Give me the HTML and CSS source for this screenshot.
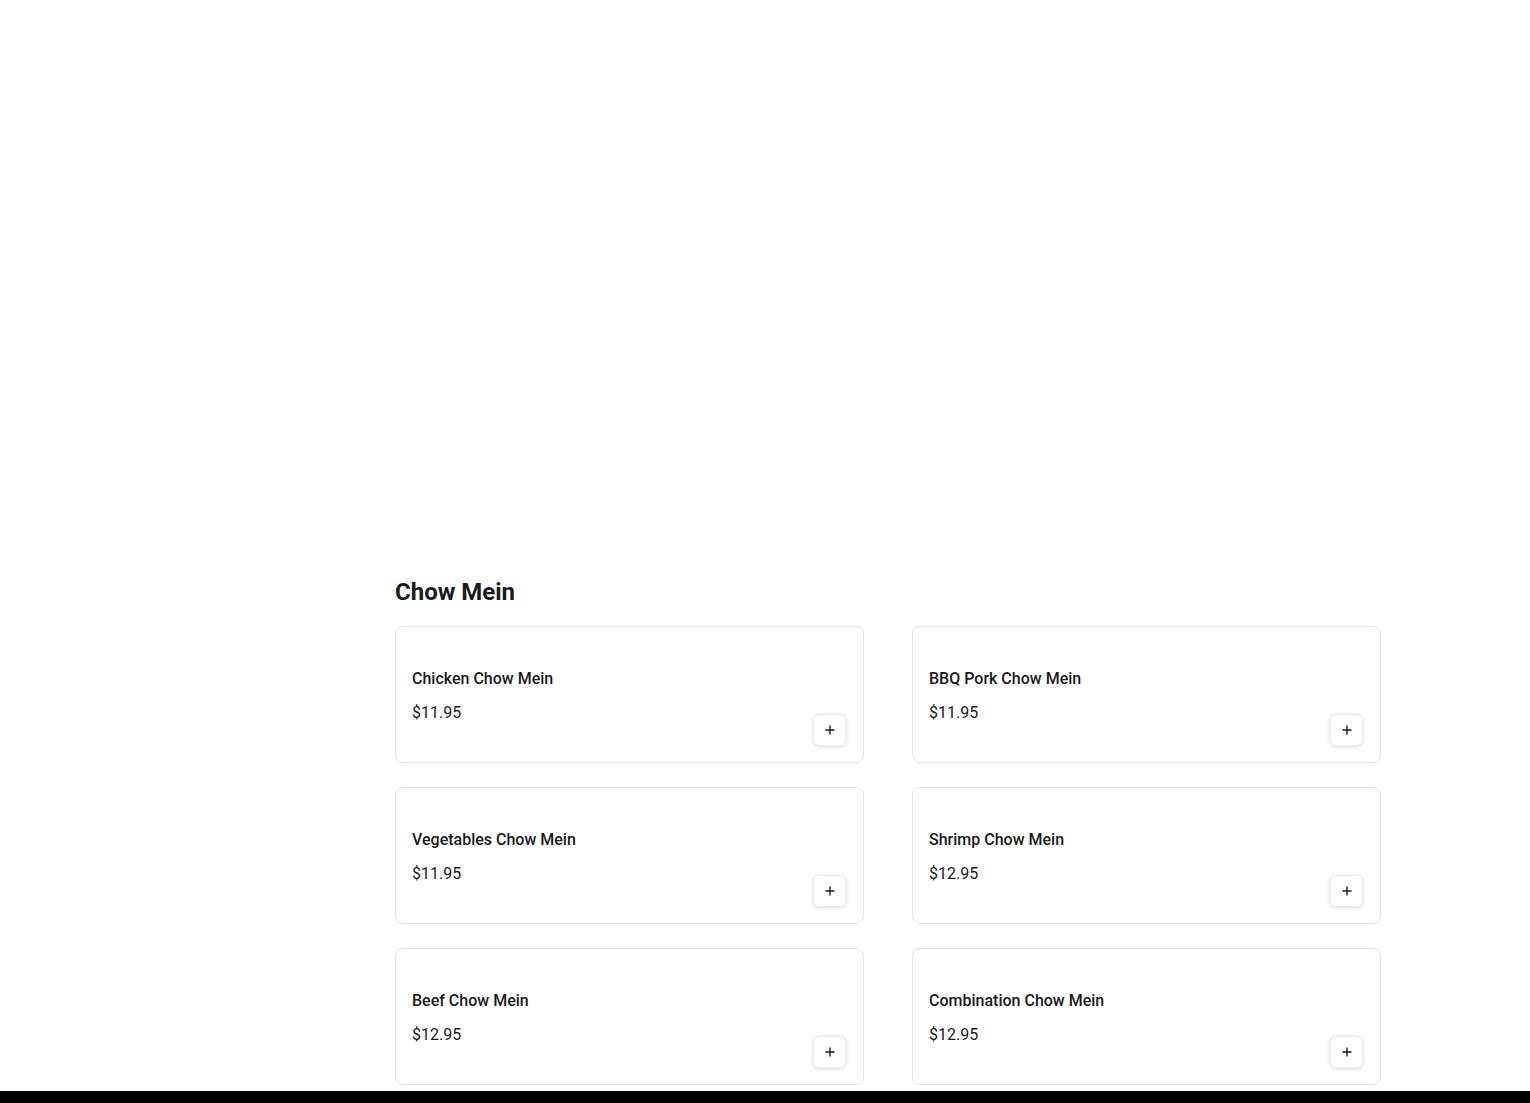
FILE: index.html
```html
<!DOCTYPE html>
<html lang="en">
<head>
<meta charset="utf-8">
<title>Chow Mein</title>
<link rel="stylesheet" href="styles.css">
</head>
<body>
<div class="hero"></div>
<div class="layout">
  <aside class="sidebar"></aside>
  <main class="menu">
    <h2 class="section-title">Chow Mein</h2>
    <div class="grid">
      <div class="card">
        <div class="info"><div class="name">Chicken Chow Mein</div><div class="price">$11.95</div></div>
        <button class="add" aria-label="Add"><svg viewBox="0 0 12 12" width="12" height="12"><path d="M6 1.5v9M1.5 6h9" stroke="#1a1a1a" stroke-width="1.4" fill="none"/></svg></button>
      </div>
      <div class="card">
        <div class="info"><div class="name">BBQ Pork Chow Mein</div><div class="price">$11.95</div></div>
        <button class="add" aria-label="Add"><svg viewBox="0 0 12 12" width="12" height="12"><path d="M6 1.5v9M1.5 6h9" stroke="#1a1a1a" stroke-width="1.4" fill="none"/></svg></button>
      </div>
      <div class="card">
        <div class="info"><div class="name">Vegetables Chow Mein</div><div class="price">$11.95</div></div>
        <button class="add" aria-label="Add"><svg viewBox="0 0 12 12" width="12" height="12"><path d="M6 1.5v9M1.5 6h9" stroke="#1a1a1a" stroke-width="1.4" fill="none"/></svg></button>
      </div>
      <div class="card">
        <div class="info"><div class="name">Shrimp Chow Mein</div><div class="price">$12.95</div></div>
        <button class="add" aria-label="Add"><svg viewBox="0 0 12 12" width="12" height="12"><path d="M6 1.5v9M1.5 6h9" stroke="#1a1a1a" stroke-width="1.4" fill="none"/></svg></button>
      </div>
      <div class="card">
        <div class="info"><div class="name">Beef Chow Mein</div><div class="price">$12.95</div></div>
        <button class="add" aria-label="Add"><svg viewBox="0 0 12 12" width="12" height="12"><path d="M6 1.5v9M1.5 6h9" stroke="#1a1a1a" stroke-width="1.4" fill="none"/></svg></button>
      </div>
      <div class="card">
        <div class="info"><div class="name">Combination Chow Mein</div><div class="price">$12.95</div></div>
        <button class="add" aria-label="Add"><svg viewBox="0 0 12 12" width="12" height="12"><path d="M6 1.5v9M1.5 6h9" stroke="#1a1a1a" stroke-width="1.4" fill="none"/></svg></button>
      </div>
    </div>
  </main>
</div>
<footer class="footer"></footer>
</body>
</html>
```
FILE: styles.css
```css
* { box-sizing: border-box; }
html, body { margin: 0; padding: 0; background: #fff; }
body {
  font-family: Roboto, "Liberation Sans", Arial, sans-serif;
  color: #1a1a1a;
  overflow: hidden;
}
.hero { height: 576px; }
.layout {
  width: 1232px;
  margin: 0 auto;
  display: grid;
  grid-template-columns: 200px 1fr;
  column-gap: 46px;
  padding-bottom: 6px;
}
.section-title {
  margin: 0 0 18px;
  font-size: 24px;
  line-height: 32px;
  font-weight: 700;
  color: #1a1a1a;
}
.grid {
  display: grid;
  grid-template-columns: 1fr 1fr;
  column-gap: 48px;
  row-gap: 24px;
}
.card {
  height: 137px;
  border: 1px solid #e3e3e3;
  border-radius: 8px;
  padding: 16px;
  display: flex;
  justify-content: space-between;
}
.info { padding-top: 24px; }
.name {
  font-size: 16px;
  line-height: 24px;
  font-weight: 500;
}
.price {
  margin-top: 10px;
  font-size: 16px;
  line-height: 24px;
  font-weight: 400;
}
.add {
  align-self: flex-end;
  width: 33px;
  height: 32px;
  margin-right: 1px;
  padding: 0;
  border: 1px solid #ececec;
  border-radius: 6px;
  background: #fff;
  box-shadow: 0 1px 4px rgba(0,0,0,0.14);
  display: flex;
  align-items: center;
  justify-content: center;
}
.add svg { display: block; }
.footer { height: 12px; background: #000; }
```
